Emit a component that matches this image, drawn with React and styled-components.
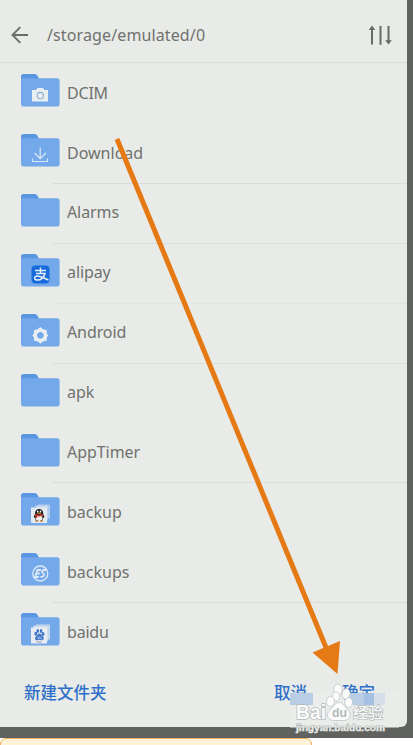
import React from "react";
import styled, { createGlobalStyle } from "styled-components";

const GlobalStyle = createGlobalStyle`
  * { box-sizing: border-box; }
  body { margin: 0; background: #fff; overflow: hidden; }
`;

const Page = styled.div`
  position: relative;
  width: 413px;
  height: 745px;
  overflow: hidden;
  display: flex;
  flex-direction: column;
  background: #fff;
  font-family: "Noto Sans", "Noto Sans CJK SC", sans-serif;
`;

const Backdrop = styled.div`
  height: 738px;
  flex: none;
  background: #60625f;
`;

const Panel = styled.main`
  display: flex;
  flex-direction: column;
  width: 407px;
  height: 727px;
  background: #e8ebe7;
  border-bottom-right-radius: 6px;
`;

const Header = styled.header`
  display: flex;
  align-items: center;
  height: 63px;
  flex: none;
  padding: 8px 15px 0 11px;
  border-bottom: 1px solid #d9dcd9;
`;

const Path = styled.h1`
  flex: 1;
  margin: 0 0 0 18px;
  font-size: 16px;
  line-height: 24px;
  font-weight: 400;
  letter-spacing: 0.12px;
  color: #70726f;
`;

const List = styled.ul`
  margin: 0;
  padding: 0;
  list-style: none;
`;

const Row = styled.li`
  display: flex;
  align-items: flex-start;
  height: 59.93px;
  padding: 10px 0 0 20px;
  background: linear-gradient(${(p) => p.$line}, ${(p) => p.$line}) 52px 0 / 355px 1px no-repeat;
`;

const Name = styled.span`
  margin: 7.6px 0 0 7px;
  font-size: 16px;
  line-height: 24px;
  letter-spacing: ${(p) => p.$spacing || 0}px;
  color: #70726f;
`;

const Footer = styled.footer`
  display: flex;
  align-items: flex-start;
  padding: 20px 32px 0 24px;
`;

const Action = styled.button`
  border: 0;
  padding: 0;
  background: none;
  font-family: "Noto Sans CJK SC", sans-serif;
  font-size: 16.5px;
  line-height: 20px;
  font-weight: 500;
  color: #2e6fc9;
  margin-left: ${(p) => p.$gap || 0};
`;

const Notice = styled.div`
  width: 312px;
  height: 20px;
  flex: none;
  border: 1px solid #f0b060;
  border-radius: 6px;
  background: #fff3d9;
`;

const Overlay = styled.svg`
  position: absolute;
  left: 0;
  top: 0;
  pointer-events: none;
`;

const Watermark = styled.div`
  position: absolute;
  left: 290px;
  top: 683px;
  width: 110px;
  height: 52px;
`;

const marks = {
  camera: (
    <>
      <path d="M12 17h4l1.500-2h5.500l1.500 2h3.500v11.500H12z" fill="#e9eef0" />
      <circle cx="20.3" cy="22.6" r="3.2" fill="none" stroke="#8faed0" strokeWidth="1.1" />
    </>
  ),
  download: (
    <path d="M20.2 14.500v11M14.500 20l5.700 5.700 5.700-5.700M12.500 25.500v3h15v-3" fill="none" stroke="#dce9f5" strokeWidth="1.200" />
  ),
  alipay: (
    <>
      <rect x="11.500" y="12.600" width="18" height="18" rx="4" fill="#176bdc" />
      <path d="M15 17.500h11M20.500 14.500v6M16 20.500h9c-1.200 4-4.200 6.600-7.600 6.600-3.800 0-3.600-4.300.1-4.100 3 .1 6 1.800 11 4" fill="none" stroke="#e7f0f8" strokeWidth="1.500" />
    </>
  ),
  android: (
    <path
      fillRule="evenodd"
      d="M20.3 14l2.600 2.300 3.600.8.500 3.600 1.300 1.700-1.300 1.700-.5 3.600-3.600.8-2.600 2.200-2.500-2.200-3.600-.8-.5-3.600-1.300-1.700 1.300-1.700.5-3.600 3.600-.8zM20.300 19a3.400 3.400 0 1 0 .1 0z"
      fill="#e9eef1"
    />
  ),
  qq: (
    <>
      <path d="M18 12.500h12v14H18z" fill="#adcaf0" />
      <path d="M15.500 13.500h12v15h-12z" fill="#c9daf0" />
      <path d="M11 15.500h16v15.500H11z" fill="#e4eaf0" />
      <path d="M13.800 25.500c0-2 1.300-2.500 1.300-4.500 0-5.300 8-5.300 8 0 0 2 1.300 2.500 1.300 4.500l-1.200.2-1 3.200H16l-1-3.200z" fill="#171c20" />
      <ellipse cx="19.100" cy="26" rx="3.400" ry="3" fill="#f2eeeb" />
      <ellipse cx="17.700" cy="19.500" rx=".8" ry="1" fill="#fff" />
      <ellipse cx="20.500" cy="19.500" rx=".8" ry="1" fill="#fff" />
      <path d="M17.200 21.200h3.900" stroke="#e6a22f" strokeWidth="1.100" />
      <path d="M15 22.800q4 1.700 8.200 0M16.300 23.500v2.500" stroke="#d33a32" strokeWidth="1.500" fill="none" />
      <path d="M15.500 29.200h2.800M20 29.200h2.800" stroke="#d5873a" strokeWidth="1.200" />
    </>
  ),
  es: (
    <>
      <circle cx="20.300" cy="21.500" r="7.500" fill="none" stroke="#dfeaf6" strokeWidth="1.300" />
      <path
        d="M21 18h-3.600l-2.200 7h3.600M16.500 21.500h3.300M26 18h-2q-1.600 0-1.900 1.400-.2 1.200 1 1.800 1.100.6.800 1.900-.4 1.800-2 1.800h-1.500"
        fill="none"
        stroke="#dfeaf6"
        strokeWidth="1.800"
      />
    </>
  ),
  baidu: (
    <>
      <path d="M16 12.500h14v15H16z" fill="#c5d8ed" />
      <path d="M13.500 13.800h14.500v15h-14.500z" fill="#d6e1ed" stroke="#b8cce4" strokeWidth=".5" />
      <path d="M11 15.500h16v16H11z" fill="#e9edf2" />
      <g fill="#3d76c6">
        <ellipse cx="15.800" cy="21.700" rx="1.400" ry="2" />
        <ellipse cx="17.800" cy="19" rx="1.300" ry="1.900" />
        <ellipse cx="21.100" cy="19" rx="1.300" ry="1.900" />
        <ellipse cx="23.100" cy="21.900" rx="1.400" ry="2" />
        <path d="M19.400 21.500c1.800 0 2.300 2 3.600 3.100 1.700 1.600.3 4.200-1.700 3.700-1.300-.3-2.500-.3-3.700 0-2.300.5-3.500-2.100-1.600-3.800 1.200-1 1.700-3 3.400-3z" />
      </g>
      <path d="M18 24.600v2.200h1.300v-2.200M20.800 24.600v2.200h1.200" stroke="#dce6f2" strokeWidth=".6" fill="none" />
      <path d="M16.500 30h5" stroke="#8d9299" strokeWidth=".9" />
    </>
  ),
};

const Folder = ({ mark }) => (
  <svg width="40" height="34" viewBox="0 0 40 34" overflow="visible">
    <path d="M1 10V3.500Q1 1 3.500 1h11.500q1.500 0 2.300 1.500L19.200 6v5H1z" fill="#5a97e0" />
    <path d="M1 5.200h18.200H37q2.600 0 2.600 2.600v23q0 2.800-2.800 2.800h-33Q1 33.600 1 30.800z" fill="#73a8ea" />
    {mark && marks[mark]}
  </svg>
);

const BackIcon = () => (
  <svg width="18" height="18" viewBox="0 0 18 18" fill="none" stroke="#6a6c69" strokeWidth="1.900">
    <path d="M17 9H1.500M9.300 1.200L1.500 9L9.300 16.800" />
  </svg>
);

const SortIcon = () => (
  <svg width="24" height="20" viewBox="0 0 24 20" fill="none" stroke="#686a67" strokeWidth="2">
    <path d="M4 3v16.500M12.500 1v18.800M20.500 1v16" />
    <path d="M4 .6L7.300 5H.7zM20.500 19.600L17.200 15.200H23.800z" fill="#686a67" stroke="none" />
  </svg>
);

const clear = "transparent";
const folders = [
  { name: "DCIM", mark: "camera", line: clear, spacing: -0.2 },
  { name: "Download", mark: "download", line: clear },
  { name: "Alarms", line: "#dadddb", spacing: -0.1 },
  { name: "alipay", mark: "alipay", line: "#dddfdd", spacing: -0.1 },
  { name: "Android", mark: "android", line: "#e2e5e2", spacing: -0.1 },
  { name: "apk", line: "#dddfdd" },
  { name: "AppTimer", line: clear, spacing: -0.05 },
  { name: "backup", mark: "qq", line: "#dadddb" },
  { name: "backups", mark: "es", line: clear },
  { name: "baidu", mark: "baidu", line: "#dadddb", spacing: -0.2 },
];

export default function App() {
  return (
    <Page>
      <GlobalStyle />
      <Backdrop>
        <Panel>
          <Header>
            <BackIcon />
            <Path>/storage/emulated/0</Path>
            <SortIcon />
          </Header>
          <List>
            {folders.map((f) => (
              <Row key={f.name} $line={f.line}>
                <Folder mark={f.mark} />
                <Name $spacing={f.spacing}>{f.name}</Name>
              </Row>
            ))}
          </List>
          <Footer>
            <Action>新建文件夹</Action>
            <Action $gap="auto">取消</Action>
            <Action $gap="35px">确定</Action>
          </Footer>
        </Panel>
      </Backdrop>
      <Notice />
      <Overlay width="413" height="745" viewBox="0 0 413 745">
        <path d="M117 139L327 650" stroke="#e57914" strokeWidth="5" />
        <path d="M312.500 652.500L340 641L337.500 674z" fill="#e57914" />
      </Overlay>
      <Watermark>
        <svg width="110" height="52" viewBox="0 0 110 52" overflow="visible">
          <rect x="0" y="10" width="109" height="35" fill="#eef0ed" opacity=".5" />
          <rect x="0" y="10" width="23" height="12" fill="#b9cde4" />
          <rect x="59" y="10" width="15" height="12" fill="#b9cde4" />
          <rect x="74" y="10" width="10" height="12" fill="#a4c0e2" />
          <rect x="84" y="10" width="11" height="12" fill="#d4dfe9" />
          <g fill="#fbfcfb" stroke="#c3cacb" strokeWidth=".9">
            <ellipse cx="48" cy="6.500" rx="4.200" ry="5.500" />
            <ellipse cx="56" cy="11" rx="4" ry="5.300" transform="rotate(10 56 11)" />
            <ellipse cx="46" cy="13.500" rx="3.800" ry="4.500" />
            <ellipse cx="40.500" cy="18.500" rx="4" ry="5" />
            <ellipse cx="58.700" cy="19.500" rx="3.900" ry="5" />
            <path d="M49.500 19.500c4 0 5 4.500 8.500 7.500 4.500 4 2 10.500-4 10.500H44c-7 0-8.500-6.500-4-10.500 3.500-3 5-7.500 9.500-7.500z" />
          </g>
          <g fill="#fafbfa" stroke="#b4baba" strokeWidth="1.600" paintOrder="stroke" fontFamily="Liberation Sans, sans-serif">
            <text x="6" y="36" fontSize="20" fontWeight="700" textLength="30" lengthAdjust="spacingAndGlyphs">Bai</text>
            <text x="42" y="34" fontSize="13" fontWeight="700" fill="#b3baba" stroke="none" textLength="15" lengthAdjust="spacingAndGlyphs">du</text>
            <text x="63" y="35" fontSize="15" fontWeight="500" fontFamily="Noto Sans CJK SC, sans-serif" textLength="30" strokeWidth="1.300">经验</text>
            <text x="6" y="47.500" fontSize="9.500" fontWeight="700" textLength="89" lengthAdjust="spacingAndGlyphs" fill="#e8eae8" stroke="#aeb2b0" strokeWidth=".9">jingyan.baidu.com</text>
          </g>
        </svg>
      </Watermark>
    </Page>
  );
}
